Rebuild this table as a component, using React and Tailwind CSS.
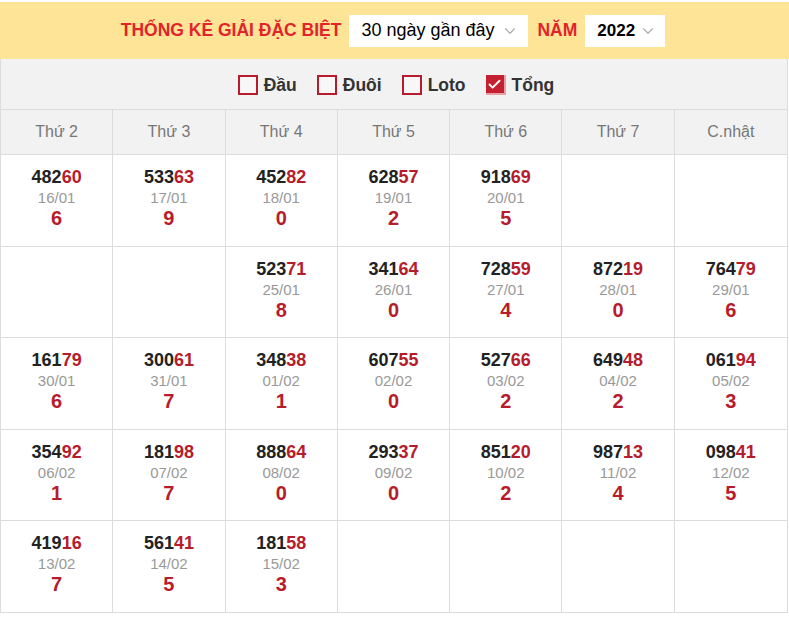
import { ChevronDown, Check } from 'lucide-react';

const DAYS = ['Thứ 2', 'Thứ 3', 'Thứ 4', 'Thứ 5', 'Thứ 6', 'Thứ 7', 'C.nhật'];

const ROWS = [
  [['48260', '16/01', 6], ['53363', '17/01', 9], ['45282', '18/01', 0], ['62857', '19/01', 2], ['91869', '20/01', 5], null, null],
  [null, null, ['52371', '25/01', 8], ['34164', '26/01', 0], ['72859', '27/01', 4], ['87219', '28/01', 0], ['76479', '29/01', 6]],
  [['16179', '30/01', 6], ['30061', '31/01', 7], ['34838', '01/02', 1], ['60755', '02/02', 0], ['52766', '03/02', 2], ['64948', '04/02', 2], ['06194', '05/02', 3]],
  [['35492', '06/02', 1], ['18198', '07/02', 7], ['88864', '08/02', 0], ['29337', '09/02', 0], ['85120', '10/02', 2], ['98713', '11/02', 4], ['09841', '12/02', 5]],
  [['41916', '13/02', 7], ['56141', '14/02', 5], ['18158', '15/02', 3], null, null, null, null],
];

const FILTERS = [
  { label: 'Đầu', checked: false },
  { label: 'Đuôi', checked: false },
  { label: 'Loto', checked: false },
  { label: 'Tổng', checked: true },
];

const Cell = ({ data }) => (
  <div className="h-[91.6px] border-r border-b border-[#dcdcdc] last:border-r-0 flex flex-col items-center pt-[12px]">
    {data && (
      <>
        <div className="text-[18px] font-bold leading-[21px] text-[#222]">
          {data[0].slice(0, 3)}
          <span className="text-[#b71c2c]">{data[0].slice(3)}</span>
        </div>
        <div className="text-[15px] leading-[20px] text-[#999]">{data[1]}</div>
        <div className="text-[20px] font-bold leading-[21px] text-[#b71c2c]">{data[2]}</div>
      </>
    )}
  </div>
);

export default function App() {
  return (
    <div className="w-[789px] bg-white pt-[2px]" style={{ fontFamily: '"Liberation Sans", Arial, sans-serif' }}>
      {/* title bar */}
      <div className="h-[57px] bg-[#fee496] flex items-center justify-center gap-[8px] pr-[3px]">
        <span className="text-[17.5px] font-bold text-[#e2232a]">THỐNG KÊ GIẢI ĐẶC BIỆT</span>
        <div className="h-[32px] w-[179px] bg-white flex items-center justify-between pl-[12px] pr-[9px]">
          <span className="text-[18px] text-black">30 ngày gần đây</span>
          <ChevronDown size={18} strokeWidth={1.5} className="text-[#aaa]" />
        </div>
        <span className="text-[17.5px] font-bold text-[#e2232a] ml-[1px]">NĂM</span>
        <div className="h-[32px] w-[80px] bg-white flex items-center justify-between pl-[12px] pr-[8px]">
          <span className="text-[17px] font-bold text-black">2022</span>
          <ChevronDown size={18} strokeWidth={1.5} className="text-[#aaa]" />
        </div>
      </div>

      <div className="border-l border-r border-[#dcdcdc] w-[788px]">
        {/* filters */}
        <div className="h-[51px] bg-[#f2f2f2] flex items-center justify-center gap-[20px] pl-[4px] pt-[2px] border-b border-[#dcdcdc]">
          {FILTERS.map(f => (
            <div key={f.label} className="flex items-center gap-[6px]">
              {f.checked ? (
                <div className="w-[20px] h-[20px] bg-[#c4202f] border-r-2 border-b-2 border-[#e6a0a6] flex items-center justify-center">
                  <Check size={15} strokeWidth={3} className="text-white" />
                </div>
              ) : (
                <div className="w-[20px] h-[20px] border-2 border-[#b71c2c] bg-[#f7f7f7]" />
              )}
              <span className="text-[17.5px] font-bold text-[#333]">{f.label}</span>
            </div>
          ))}
        </div>

        {/* table header */}
        <div className="grid grid-cols-7 bg-[#f2f2f2] border-b border-[#dcdcdc]">
          {DAYS.map(d => (
            <div key={d} className="h-[44px] flex items-center justify-center text-[16px] text-[#777] border-r border-[#dcdcdc] last:border-r-0">
              {d}
            </div>
          ))}
        </div>

        {/* table body */}
        {ROWS.map((row, i) => (
          <div key={i} className="grid grid-cols-7">
            {row.map((c, j) => <Cell key={j} data={c} />)}
          </div>
        ))}
      </div>
    </div>
  );
}
